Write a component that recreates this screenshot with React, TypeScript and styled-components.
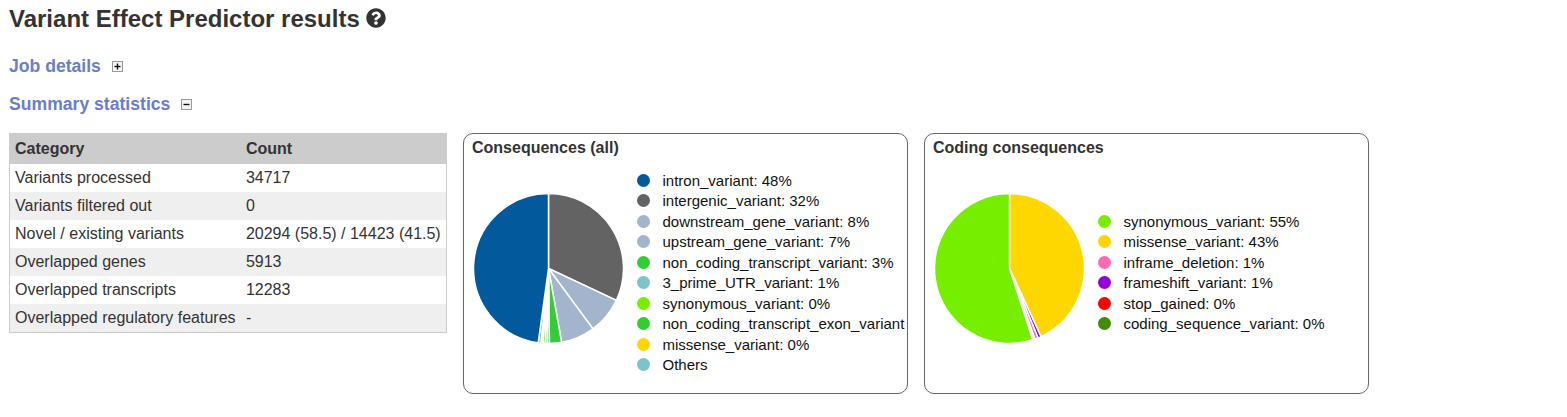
import React from 'react';
import styled, { createGlobalStyle } from 'styled-components';
import { FaQuestionCircle } from 'react-icons/fa';

const GlobalStyle = createGlobalStyle`
  html, body {
    margin: 0;
    padding: 0;
    background: #fff;
    font-family: 'Liberation Sans', Arial, sans-serif;
    color: #333;
  }
`;

const Page = styled.div`
  padding: 5px 9px 0;
  width: 1567px;
  height: 417px;
  box-sizing: border-box;
  overflow: hidden;
`;

const Title = styled.h1`
  display: flex;
  align-items: center;
  gap: 6px;
  margin: 0;
  height: 27px;
  font-size: 24px;
  line-height: 27px;
  font-weight: 700;
  color: #333;
  svg {
    width: 20px;
    height: 20px;
    margin-bottom: 2px;
    color: #333;
  }
`;

const SectionHeading = styled.h2<{ $top: number }>`
  display: flex;
  align-items: center;
  gap: 11px;
  margin: ${(p) => p.$top}px 0 0;
  height: 20px;
  font-size: 17.6px;
  line-height: 20px;
  font-weight: 700;
  color: #6a7dcb;
`;

const ToggleBox = styled.svg`
  width: 11px;
  height: 11px;
  display: block;
`;

const Content = styled.div`
  display: flex;
  align-items: flex-start;
  margin-top: 19px;
`;

const StatsTable = styled.table`
  width: 438px;
  border-collapse: separate;
  border-spacing: 0;
  border: 1px solid #ccc;
  font-size: 16px;
  color: #333;
  margin-right: 16px;
  flex: none;
`;

const HeadCell = styled.th`
  height: 30px;
  padding: 0 5px;
  background: #ccc;
  text-align: left;
  font-weight: 700;
  box-sizing: border-box;
`;

const StatRow = styled.tr`
  &:nth-child(even) {
    background: #efefef;
  }
`;

const StatCell = styled.td`
  height: 28px;
  padding: 0 5px;
  box-sizing: border-box;
  white-space: nowrap;
`;

const Panel = styled.section`
  width: 445px;
  height: 261px;
  box-sizing: border-box;
  margin-right: 16px;
  padding: 5px 2px 0 8px;
  border: 1px solid #666;
  border-radius: 10px;
  flex: none;
`;

const PanelTitle = styled.h3`
  margin: 0;
  height: 18px;
  font-size: 16px;
  line-height: 18px;
  font-weight: 700;
  color: #333;
`;

const ChartBody = styled.div`
  display: flex;
  align-items: center;
  gap: 13px;
  height: 231px;
`;

const PieSvg = styled.svg`
  width: 151px;
  height: 151px;
  flex: none;
  margin: 0 0 9px 1px;
`;

const Legend = styled.ul`
  margin: 0;
  padding: 0;
  list-style: none;
  font-size: 15px;
  color: #111;
`;

const LegendRow = styled.li`
  display: flex;
  align-items: center;
  gap: 12.5px;
  height: 20.5px;
  white-space: nowrap;
`;

const LegendDot = styled.span<{ $color: string }>`
  width: 13px;
  height: 13px;
  border-radius: 50%;
  background: ${(p) => p.$color};
  flex: none;
`;

type Slice = { label: string; color: string; size: number };

const point = (pct: number) => {
  const a = (pct / 100) * 2 * Math.PI;
  return `${(75.5 + 75 * Math.sin(a)).toFixed(2)} ${(75.5 - 75 * Math.cos(a)).toFixed(2)}`;
};

const Pie = ({ slices }: { slices: Slice[] }) => {
  let start = 0;
  return (
    <PieSvg viewBox="0 0 151 151">
      {slices.map((s) => {
        const end = start + s.size;
        const large = s.size > 50 ? 1 : 0;
        const d = `M75.5 75.5 L${point(start)} A75 75 0 ${large} 1 ${point(end)} Z`;
        start = end;
        return <path key={s.label} d={d} fill={s.color} stroke="#fff" strokeWidth={1.5} />;
      })}
    </PieSvg>
  );
};

// pie order is clockwise from 12 o'clock, legend order differs
const allSlices: Slice[] = [
  { label: 'intergenic', color: '#636363', size: 32 },
  { label: 'downstream', color: '#a2b5cd', size: 7.9 },
  { label: 'upstream', color: '#a2b5cd', size: 7.3 },
  { label: 'non_coding', color: '#32cd32', size: 2.6 },
  { label: 'others-a', color: '#7ac5cd', size: 0.5 },
  { label: 'synonymous', color: '#76ee00', size: 0.45 },
  { label: 'exon', color: '#32cd32', size: 0.45 },
  { label: 'missense', color: '#ffd700', size: 0.4 },
  { label: 'others-b', color: '#7ac5cd', size: 0.6 },
  { label: 'intron', color: '#02599c', size: 47.8 },
];

const allLegend = [
  ['#02599c', 'intron_variant: 48%'],
  ['#636363', 'intergenic_variant: 32%'],
  ['#a2b5cd', 'downstream_gene_variant: 8%'],
  ['#a2b5cd', 'upstream_gene_variant: 7%'],
  ['#32cd32', 'non_coding_transcript_variant: 3%'],
  ['#7ac5cd', '3_prime_UTR_variant: 1%'],
  ['#76ee00', 'synonymous_variant: 0%'],
  ['#32cd32', 'non_coding_transcript_exon_variant'],
  ['#ffd700', 'missense_variant: 0%'],
  ['#7ac5cd', 'Others'],
];

const codingSlices: Slice[] = [
  { label: 'missense', color: '#ffd700', size: 43.1 },
  { label: 'frameshift', color: '#9400d3', size: 0.7 },
  { label: 'inframe', color: '#ff69b4', size: 0.7 },
  { label: 'stop', color: '#ff0000', size: 0.3 },
  { label: 'coding', color: '#458b00', size: 0.2 },
  { label: 'synonymous', color: '#76ee00', size: 55 },
];

const codingLegend = [
  ['#76ee00', 'synonymous_variant: 55%'],
  ['#ffd700', 'missense_variant: 43%'],
  ['#ff69b4', 'inframe_deletion: 1%'],
  ['#9400d3', 'frameshift_variant: 1%'],
  ['#ff0000', 'stop_gained: 0%'],
  ['#458b00', 'coding_sequence_variant: 0%'],
];

const stats = [
  ['Variants processed', '34717'],
  ['Variants filtered out', '0'],
  ['Novel / existing variants', '20294 (58.5) / 14423 (41.5)'],
  ['Overlapped genes', '5913'],
  ['Overlapped transcripts', '12283'],
  ['Overlapped regulatory features', '-'],
];

const Toggle = ({ open }: { open: boolean }) => (
  <ToggleBox viewBox="0 0 11 11">
    <rect x="0.5" y="0.5" width="10" height="10" fill="#f4f4f4" stroke="#999" />
    <path d="M2.5 5.5h6" stroke="#111" strokeWidth="1.4" />
    {!open && <path d="M5.5 2.5v6" stroke="#111" strokeWidth="1.4" />}
  </ToggleBox>
);

const ChartPanel = ({ title, slices, legend }: { title: string; slices: Slice[]; legend: string[][] }) => (
  <Panel>
    <PanelTitle>{title}</PanelTitle>
    <ChartBody>
      <Pie slices={slices} />
      <Legend>
        {legend.map(([color, text]) => (
          <LegendRow key={text}>
            <LegendDot $color={color} />
            {text}
          </LegendRow>
        ))}
      </Legend>
    </ChartBody>
  </Panel>
);

const App = () => (
  <Page>
    <GlobalStyle />
    <Title>
      Variant Effect Predictor results
      <FaQuestionCircle />
    </Title>
    <SectionHeading $top={24}>
      Job details
      <Toggle open={false} />
    </SectionHeading>
    <SectionHeading $top={18}>
      Summary statistics
      <Toggle open />
    </SectionHeading>
    <Content>
      <StatsTable>
        <thead>
          <tr>
            <HeadCell>Category</HeadCell>
            <HeadCell>Count</HeadCell>
          </tr>
        </thead>
        <tbody>
          {stats.map(([name, value]) => (
            <StatRow key={name}>
              <StatCell>{name}</StatCell>
              <StatCell>{value}</StatCell>
            </StatRow>
          ))}
        </tbody>
      </StatsTable>
      <ChartPanel title="Consequences (all)" slices={allSlices} legend={allLegend} />
      <ChartPanel title="Coding consequences" slices={codingSlices} legend={codingLegend} />
    </Content>
  </Page>
);

export default App;
